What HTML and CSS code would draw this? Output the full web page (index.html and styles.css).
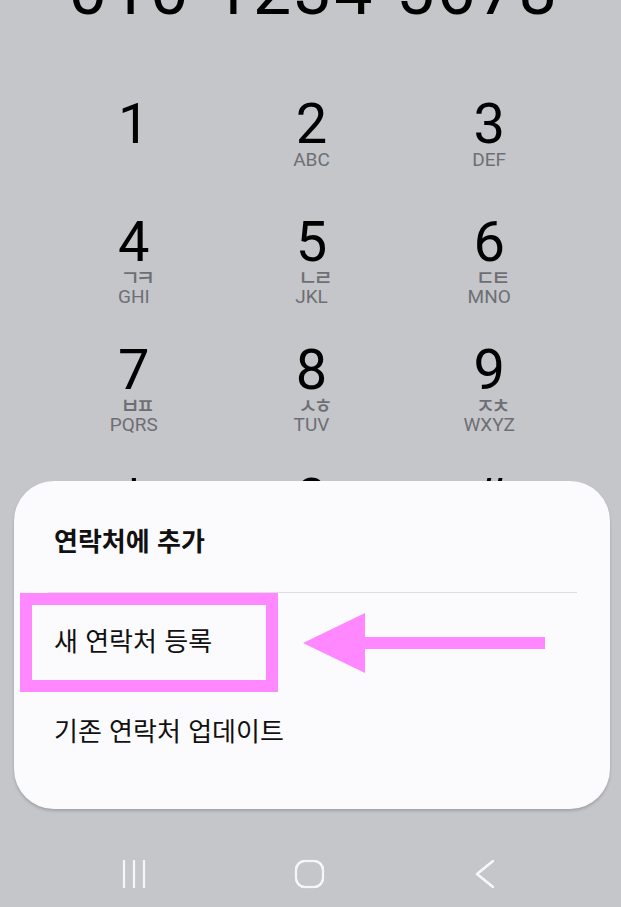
FILE: index.html
```html
<!DOCTYPE html>
<html lang="ko">
<head>
<meta charset="utf-8">
<title>Dialer</title>
<link rel="stylesheet" href="styles.css">
</head>
<body>
<div class="screen">
  <div class="display">010-1234-5678</div>
  <div class="keypad">
    <div class="key"><span class="digit">1</span><span class="letters"></span></div>
    <div class="key"><span class="digit">2</span><span class="letters">ABC</span></div>
    <div class="key"><span class="digit">3</span><span class="letters">DEF</span></div>
    <div class="key"><span class="digit">4</span><span class="jamo">ㄱㅋ</span><span class="letters">GHI</span></div>
    <div class="key"><span class="digit">5</span><span class="jamo">ㄴㄹ</span><span class="letters">JKL</span></div>
    <div class="key"><span class="digit">6</span><span class="jamo">ㄷㅌ</span><span class="letters">MNO</span></div>
    <div class="key"><span class="digit">7</span><span class="jamo">ㅂㅍ</span><span class="letters">PQRS</span></div>
    <div class="key"><span class="digit">8</span><span class="jamo">ㅅㅎ</span><span class="letters">TUV</span></div>
    <div class="key"><span class="digit">9</span><span class="jamo">ㅈㅊ</span><span class="letters">WXYZ</span></div>
    <div class="key"><span class="digit">*</span><span class="plus"></span></div>
    <div class="key"><span class="digit">0</span><span class="plus">+</span></div>
    <div class="key"><span class="digit">#</span><span class="plus"></span></div>
  </div>
  <nav class="navbar">
    <div class="nav-item">
      <svg class="nav-icon" width="26" height="30" viewBox="0 0 26 30"><path d="M3 2v26M13 2v26M23 2v26"/></svg>
    </div>
    <div class="nav-item">
      <svg class="nav-icon" width="31" height="30" viewBox="0 0 31 30"><rect x="2" y="2" width="27" height="26" rx="9"/></svg>
    </div>
    <div class="nav-item">
      <svg class="nav-icon" width="22" height="30" viewBox="0 0 22 30"><path d="M19 2L3 15l16 13"/></svg>
    </div>
  </nav>
</div>

<div class="sheet">
  <div class="sheet-title">연락처에 추가</div>
  <div class="divider"></div>
  <div class="options">
    <div class="option">새 연락처 등록</div>
    <div class="option">기존 연락처 업데이트</div>
  </div>
  <div class="highlight"></div>
  <svg class="arrow" width="242" height="60" viewBox="0 0 242 60">
    <polygon points="0,30 62,0 62,60"/>
    <rect x="60" y="24" width="182" height="12"/>
  </svg>
</div>
</body>
</html>
```
FILE: styles.css
```css
html, body {
  margin: 0;
  padding: 0;
}
body {
  background: #c5c6ca;
  width: 621px;
  height: 907px;
  overflow: hidden;
  position: relative;
  font-family: Roboto, "Noto Sans CJK KR", sans-serif;
}
.screen {
  height: 907px;
  display: flex;
  flex-direction: column;
}
.display {
  margin-top: -43px;
  padding-left: 7px;
  font: 400 68px/68px Roboto, sans-serif;
  letter-spacing: 2.5px;
  text-align: center;
  color: #000;
  white-space: nowrap;
}
.keypad {
  margin-top: 45.5px;
  padding: 0 43px 0 45px;
  display: grid;
  grid-template-columns: repeat(3, 1fr);
  grid-auto-rows: 128px;
}
.key {
  display: flex;
  flex-direction: column;
  align-items: center;
  justify-content: center;
}
.digit {
  font: 400 56px/44px Roboto, sans-serif;
  color: #000;
  height: 44px;
}
.jamo {
  font: 500 21px/25px "Noto Sans CJK KR", sans-serif;
  color: #6e6f73;
  height: 25px;
  letter-spacing: -4px;
  padding-left: 4px;
}
.letters {
  font: 400 19px/16px Roboto, sans-serif;
  color: #6e6f73;
  height: 16px;
}
.digit + .letters {
  margin-top: 6px;
}
.plus {
  font: 400 24px/40px Roboto, sans-serif;
  color: #6e6f73;
  height: 40px;
}
.navbar {
  margin-top: auto;
  height: 66px;
  padding: 0 48px 0 46px;
  display: grid;
  grid-template-columns: repeat(3, 1fr);
  align-items: center;
}
.nav-item {
  display: flex;
  justify-content: center;
  align-items: center;
}
.nav-icon {
  fill: none;
  stroke: #f6f6f8;
  stroke-width: 3;
  stroke-linecap: round;
  stroke-linejoin: round;
  filter: drop-shadow(0 0 0.6px rgba(70, 70, 80, 0.55));
}
.sheet {
  position: absolute;
  left: 14px;
  top: 481px;
  width: 596px;
  height: 328px;
  border-radius: 40px;
  background: #fbfbfd;
  box-shadow: 0 2px 3px rgba(0, 0, 0, 0.18);
}
.sheet-title {
  padding: 39px 40px 0;
  font: 700 26px/40px "Noto Sans CJK KR", sans-serif;
  color: #111;
}
.divider {
  margin: 32px 33px 0 34px;
  height: 1px;
  background: #dedee2;
}
.options {
  padding-top: 2px;
}
.option {
  padding-left: 40px;
  font: 400 26px/90px "Noto Sans CJK KR", sans-serif;
  color: #111;
  height: 90px;
}
.highlight {
  position: absolute;
  left: 6px;
  top: 112px;
  width: 258px;
  height: 99px;
  box-sizing: border-box;
  border: 12px solid #ff87ff;
}
.arrow {
  position: absolute;
  left: 289px;
  top: 132px;
  fill: #ff87ff;
}
```
